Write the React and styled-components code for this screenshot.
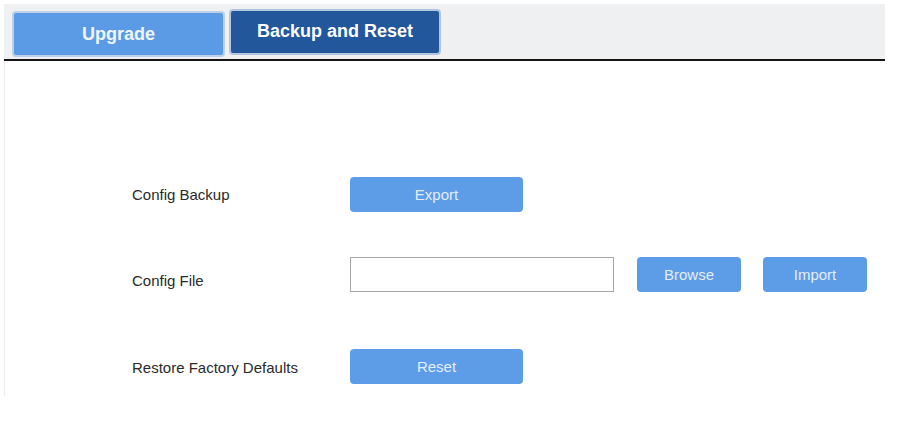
import styled, { createGlobalStyle } from "styled-components";

const GlobalStyle = createGlobalStyle`
  body {
    margin: 0;
    background: #ffffff;
    font-family: "Liberation Sans", Arial, sans-serif;
  }
`;

const Page = styled.div`
  width: 881px;
  padding: 4px 0 0 4px;
`;

const TabBar = styled.div`
  height: 55px;
  background: #eef0f2;
  border-bottom: 2px solid #151515;
  display: flex;
  align-items: flex-start;
  gap: 4px;
  padding-left: 8px;
`;

const Tab = styled.button`
  box-sizing: border-box;
  width: ${(p) => p.$width}px;
  height: 46px;
  margin-top: ${(p) => (p.$active ? 5 : 7)}px;
  padding: 0;
  padding-bottom: ${(p) => (p.$active ? 2 : 0)}px;
  border: 2px solid ${(p) => (p.$active ? "#b3c6e0" : "#bcd0ea")};
  border-radius: 4px;
  background: ${(p) => (p.$active ? "#22589b" : "#5b9be6")};
  color: ${(p) => (p.$active ? "#ffffff" : "#eef5fd")};
  font-family: "Liberation Sans", Arial, sans-serif;
  font-size: 18px;
  font-weight: bold;
  cursor: pointer;
`;

const Content = styled.div`
  border-left: 1px solid #ececec;
  padding: 116px 0 12px 127px;
  display: flex;
  flex-direction: column;
`;

const Row = styled.div`
  display: flex;
  align-items: center;
  height: 35px;
  margin-top: ${(p) => p.$gap || 0}px;
`;

const Label = styled.div`
  width: 218px;
  font-size: 15px;
  color: #2a2a2a;
  padding-top: ${(p) => p.$shift || 0}px;
`;

const Button = styled.button`
  box-sizing: border-box;
  width: ${(p) => p.$width}px;
  height: 35px;
  margin-right: ${(p) => p.$after || 0}px;
  border: none;
  border-radius: 4px;
  background: #5d9ce7;
  color: #e4eefb;
  font-family: "Liberation Sans", Arial, sans-serif;
  font-size: 15px;
  cursor: pointer;
`;

const FileInput = styled.input`
  box-sizing: border-box;
  width: 264px;
  height: 35px;
  margin-right: 23px;
  border: 1px solid #a6a6a6;
  background: #ffffff;
  padding: 0 6px;
  font-size: 15px;
  outline: none;
`;

export default function App() {
  return (
    <>
      <GlobalStyle />
      <Page>
        <TabBar>
          <Tab $width={213}>Upgrade</Tab>
          <Tab $width={212} $active>
            Backup and Reset
          </Tab>
        </TabBar>
        <Content>
          <Row>
            <Label>Config Backup</Label>
            <Button $width={173}>Export</Button>
          </Row>
          <Row $gap={45}>
            <Label $shift={12}>Config File</Label>
            <FileInput type="text" />
            <Button $width={104} $after={22}>
              Browse
            </Button>
            <Button $width={104}>Import</Button>
          </Row>
          <Row $gap={57}>
            <Label $shift={2}>Restore Factory Defaults</Label>
            <Button $width={173}>Reset</Button>
          </Row>
        </Content>
      </Page>
    </>
  );
}
